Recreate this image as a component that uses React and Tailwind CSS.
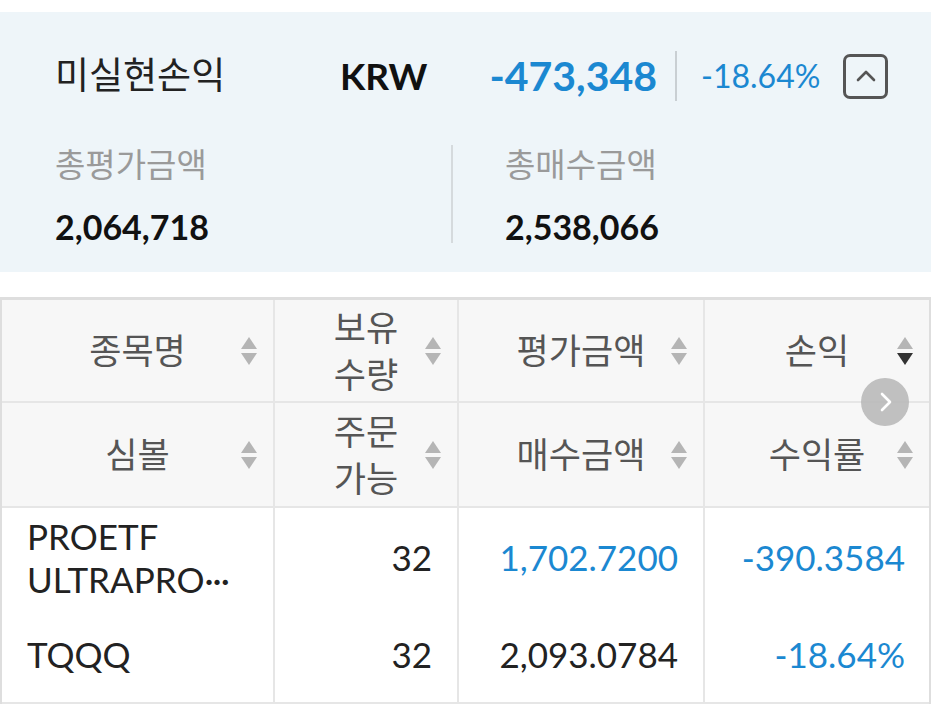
import React from 'react';

const font = { fontFamily: "Lato, 'Noto Sans CJK KR', sans-serif" };

function SortIcon({ active }) {
  return (
    <svg width="18" height="30" viewBox="0 0 18 30" className="shrink-0">
      <polygon points="9,1 17,13 1,13" fill="#b5b5b5" />
      <polygon points="1,17 17,17 9,29" fill={active ? '#333333' : '#b5b5b5'} />
    </svg>
  );
}

function HeadCell({ lines, active, last, h }) {
  return (
    <div
      className={`flex items-center px-[15px] bg-[#f7f7f7] border-b-2 border-[#e6e6e6] ${h} ${
        last ? '' : 'border-r-2'
      }`}
    >
      <div className="w-[18px] shrink-0" />
      <div className="flex-1 text-center text-[35px] leading-[47px] text-[#555]">
        {lines.map((l) => (
          <div key={l}>{l}</div>
        ))}
      </div>
      <SortIcon active={active} />
    </div>
  );
}

export default function App() {
  return (
    <div className="w-[931px] h-[713px] bg-white overflow-hidden relative" style={font}>
      {/* summary */}
      <div className="mt-[12px] h-[260px] bg-[#eef5f9] pl-[55px]">
        <div className="flex items-center h-[130px] pb-[2px]">
          <div className="w-[285px] text-[37px] text-[#222] -mt-[2px]">미실현손익</div>
          <div className="text-[37px] font-bold text-[#111]">KRW</div>
          <div className="ml-[62px] text-[41px] font-bold text-[#1b88d1]">-473,348</div>
          <div className="ml-[18px] w-[2px] h-[50px] bg-[#c9cfd3]" />
          <div className="ml-[24px] text-[32px] text-[#1b88d1]">-18.64%</div>
          <div className="ml-[23px] w-[45px] h-[45px] border-[3px] border-[#555] rounded-[7px] flex items-center justify-center">
            <svg width="24" height="24" viewBox="0 0 24 24">
              <polyline points="4,16 12,8 20,16" fill="none" stroke="#555" strokeWidth="2.6" strokeLinecap="round" strokeLinejoin="round" />
            </svg>
          </div>
        </div>
        <div className="flex">
          <div className="w-[396px] pt-[2px]">
            <div className="text-[33px] leading-[40px] text-[#9a9a9a]">총평가금액</div>
            <div className="mt-[22px] text-[34px] leading-[42px] font-bold text-[#111]">2,064,718</div>
          </div>
          <div className="mt-[3px] w-[2px] h-[98px] bg-[#d5dadd]" />
          <div className="pl-[52px] pt-[2px]">
            <div className="text-[33px] leading-[40px] text-[#9a9a9a]">총매수금액</div>
            <div className="mt-[22px] text-[34px] leading-[42px] font-bold text-[#111]">2,538,066</div>
          </div>
        </div>
      </div>

      {/* table */}
      <div className="mt-[25px] border-t-[3px] border-l-2 border-r-2 border-[#dedede]">
        <div className="grid grid-cols-[273px_184px_246px_224px]">
          <HeadCell lines={['종목명']} h="h-[103px]" />
          <HeadCell lines={['보유', '수량']} h="h-[103px]" />
          <HeadCell lines={['평가금액']} h="h-[103px]" />
          <HeadCell lines={['손익']} h="h-[103px]" active last />
          <HeadCell lines={['심볼']} h="h-[105px]" />
          <HeadCell lines={['주문', '가능']} h="h-[105px]" />
          <HeadCell lines={['매수금액']} h="h-[105px]" />
          <HeadCell lines={['수익률']} h="h-[105px]" last />

          <div className="border-r-2 border-b-2 border-[#e6e6e6] text-[35px] text-[#222]">
            <div className="h-[99px] flex items-center pl-[25px] leading-[43px]">
              <div>
                PROETF
                <br />
                ULTRAPRO<span className="tracking-[-1px]">···</span>
              </div>
            </div>
            <div className="h-[95px] flex items-center pl-[25px]">TQQQ</div>
          </div>
          <div className="border-r-2 border-b-2 border-[#e6e6e6] text-[35px] text-[#222] text-right pr-[25px]">
            <div className="h-[99px] flex items-center justify-end">32</div>
            <div className="h-[95px] flex items-center justify-end">32</div>
          </div>
          <div className="border-r-2 border-b-2 border-[#e6e6e6] text-[35px] pr-[25px]">
            <div className="h-[99px] flex items-center justify-end text-[#1b88d1]">1,702.7200</div>
            <div className="h-[95px] flex items-center justify-end text-[#222]">2,093.0784</div>
          </div>
          <div className="border-b-2 border-[#e6e6e6] text-[35px] pr-[24px] text-[#1b88d1]">
            <div className="h-[99px] flex items-center justify-end">-390.3584</div>
            <div className="h-[95px] flex items-center justify-end">-18.64%</div>
          </div>
        </div>
      </div>

      {/* next arrow */}
      <div className="absolute left-[861px] top-[378px] w-[48px] h-[48px] rounded-full bg-[#b9b9b9]/90 flex items-center justify-center">
        <svg width="24" height="24" viewBox="0 0 24 24">
          <polyline points="9,4 17,12 9,20" fill="none" stroke="#fff" strokeWidth="2.6" strokeLinecap="round" strokeLinejoin="round" />
        </svg>
      </div>
    </div>
  );
}
